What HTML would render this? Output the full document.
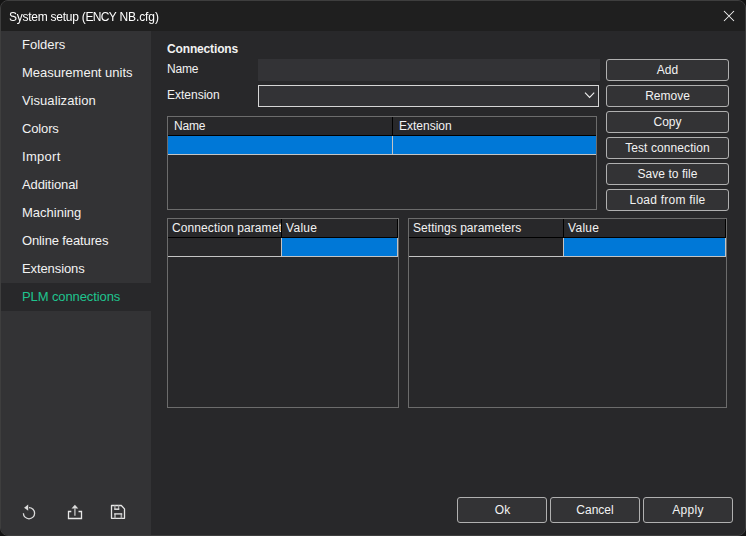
<!DOCTYPE html>
<html lang="en">
<head>
<meta charset="utf-8">
<title>System setup (ENCY NB.cfg)</title>
<style>
*{box-sizing:border-box;margin:0;padding:0}
html,body{width:746px;height:536px;overflow:hidden;background:#141414}
body{font-family:"Liberation Sans",sans-serif;color:#f2f2f2;position:relative}
#win{position:absolute;left:0;top:0;width:746px;height:536px;border:1px solid #3e3e3e;border-radius:8px;background:#28282a;overflow:hidden}
#inner{position:absolute;left:-1px;top:-1px;width:746px;height:536px}
.abs{position:absolute}
#title{left:0;top:0;width:746px;height:31px;background:#1f1f1f}
#side{left:0;top:31px;width:151px;height:505px;background:#333335}
.t{position:absolute;white-space:nowrap;line-height:16px;font-size:12px}
.nav{position:absolute;left:0;width:151px;height:28px;font-size:13px;line-height:28px;padding-left:22px;white-space:nowrap}
.nav.sel{background:#28282a;color:#1fc48e}
.btn{position:absolute;height:22px;border:1px solid #b0b0b0;border-radius:3px;background:#333335;font-size:12px;line-height:20px;text-align:center;white-space:nowrap}
.btn.big{height:26px;line-height:24px}
.tbl{position:absolute;border:1px solid #6c6c6c;background:#28282a}
.hl{position:absolute;background:#000}
.ll{position:absolute;background:#c4c4c4}
.blue{position:absolute;background:#0078d7}
</style>
</head>
<body>
<div id="win"><div id="inner">
  <div id="title" class="abs"></div>
  <div class="t" id="ttl" style="left:9px;top:9px;font-size:12px;letter-spacing:-0.26px;will-change:transform;color:#fff">System setup (<span style="letter-spacing:-0.65px">ENC</span>Y <span style="letter-spacing:-0.08px">NB.cfg)</span></div>
  <svg class="abs" style="left:722px;top:9px" width="14" height="14" viewBox="0 0 14 14"><path d="M2 2 L12 12 M12 2 L2 12" stroke="#f4f4f4" stroke-width="1.05" fill="none"/></svg>

  <div id="side" class="abs">
    <div class="nav" style="top:0px"><span>Folders</span></div>
    <div class="nav" style="top:28px"><span>Measurement units</span></div>
    <div class="nav" style="top:56px"><span style="letter-spacing:0.08px">Visualization</span></div>
    <div class="nav" style="top:84px"><span style="letter-spacing:-0.15px">Colors</span></div>
    <div class="nav" style="top:112px"><span style="letter-spacing:0.28px">Import</span></div>
    <div class="nav" style="top:140px"><span style="letter-spacing:-0.1px">Additional</span></div>
    <div class="nav" style="top:168px"><span>Machining</span></div>
    <div class="nav" style="top:196px"><span style="letter-spacing:-0.12px">Online features</span></div>
    <div class="nav" style="top:224px"><span style="letter-spacing:-0.1px">Extensions</span></div>
    <div class="nav sel" style="top:252px"><span style="letter-spacing:-0.1px">PLM connections</span></div>
  </div>

  <!-- bottom icons -->
  <svg class="abs" style="left:16px;top:498px" width="28" height="28" viewBox="16 498 28 28">
    <path d="M29 507.6 A5.6 5.6 0 1 1 23.4 513.2" stroke="#dcdcdc" stroke-width="1.3" fill="none"/>
    <path d="M24.1 507.7 L28.2 504.6 L28.2 510.8 Z" fill="#dcdcdc"/>
  </svg>
  <svg class="abs" style="left:61px;top:498px" width="28" height="28" viewBox="61 498 28 28">
    <path d="M71.3 511.5 H68.5 V518.5 H81.5 V511.5 H78.5" stroke="#e6e6e6" stroke-width="1.3" fill="none"/>
    <path d="M74.9 508.4 V515.8" stroke="#b4b4b4" stroke-width="1.5" fill="none"/>
    <path d="M74.9 504.8 L78.3 508.5 H71.5 Z" fill="#dcdcdc"/>
  </svg>
  <svg class="abs" style="left:104px;top:498px" width="28" height="28" viewBox="104 498 28 28">
    <path d="M111.5 505.5 H121.3 L124.5 508.9 V518.3 H111.5 Z" stroke="#e6e6e6" stroke-width="1.3" fill="none" stroke-linejoin="round"/>
    <path d="M114.9 505.5 V509.2 M118.6 505.5 V509.2" stroke="#a8a8a8" stroke-width="1.3" fill="none"/>
    <path d="M114.2 509.2 H119.3" stroke="#e6e6e6" stroke-width="1.4" fill="none"/>
    <path d="M115 518.3 V513.8 M121.4 518.3 V513.8" stroke="#a8a8a8" stroke-width="1.6" fill="none"/>
    <path d="M114.2 513.9 H122.2" stroke="#e6e6e6" stroke-width="1.3" fill="none"/>
  </svg>

  <!-- content -->
  <div class="t" id="hdr" style="left:167px;top:41px;font-weight:bold;letter-spacing:-0.15px">Connections</div>
  <div class="t" id="lname" style="left:167px;top:61px;letter-spacing:-0.2px">Name</div>
  <div class="t" id="lext" style="left:167px;top:87px">Extension</div>
  <div class="abs" style="left:258px;top:59px;width:342px;height:22px;background:#333336"></div>
  <div class="abs" style="left:258px;top:85px;width:341px;height:22px;background:#333336;border:1px solid #d6d6d6"></div>
  <svg class="abs" style="left:583px;top:90px" width="14" height="10" viewBox="583 90 14 10"><path d="M585 92.7 L589.6 97.4 L594.2 92.7" stroke="#f0f0f0" stroke-width="1.1" fill="none"/></svg>

  <div class="btn" style="left:606px;top:59px;width:123px"><span>Add</span></div>
  <div class="btn" style="left:606px;top:85px;width:123px"><span>Remove</span></div>
  <div class="btn" style="left:606px;top:111px;width:123px"><span>Copy</span></div>
  <div class="btn" style="left:606px;top:137px;width:123px"><span style="letter-spacing:0.09px">Test connection</span></div>
  <div class="btn" style="left:606px;top:163px;width:123px"><span style="letter-spacing:0.04px">Save to file</span></div>
  <div class="btn" style="left:606px;top:189px;width:123px"><span style="letter-spacing:0.23px">Load from file</span></div>

  <!-- table 1 -->
  <div class="tbl" style="left:167px;top:116px;width:430px;height:94px"></div>
  <div class="hl" style="left:168px;top:135px;width:428px;height:1px"></div>
  <div class="hl" style="left:392px;top:117px;width:1px;height:19px"></div>
  <div class="blue" style="left:168px;top:136px;width:428px;height:18px"></div>
  <div class="ll" style="left:168px;top:154px;width:428px;height:1px"></div>
  <div class="ll" style="left:392px;top:136px;width:1px;height:19px"></div>
  <div class="t" id="h1a" style="left:174px;top:118px;letter-spacing:-0.2px">Name</div>
  <div class="t" id="h1b" style="left:399px;top:118px">Extension</div>

  <!-- table 2 -->
  <div class="tbl" style="left:167px;top:218px;width:232px;height:190px"></div>
  <div class="hl" style="left:168px;top:237px;width:230px;height:1px"></div>
  <div class="hl" style="left:281px;top:219px;width:1px;height:19px"></div>
  <div class="hl" style="left:397px;top:219px;width:1px;height:19px"></div>
  <div class="blue" style="left:282px;top:238px;width:115px;height:18px"></div>
  <div class="ll" style="left:168px;top:256px;width:230px;height:1px"></div>
  <div class="ll" style="left:281px;top:238px;width:1px;height:19px"></div>
  <div class="ll" style="left:397px;top:238px;width:1px;height:19px"></div>
  <div class="abs" style="left:168px;top:219px;width:113px;height:18px;overflow:hidden"><div class="t" id="h2a" style="left:4px;top:1px;letter-spacing:0.1px">Connection parameters</div></div>
  <div class="t" id="h2b" style="left:286px;top:220px;letter-spacing:0.3px">Value</div>

  <!-- table 3 -->
  <div class="tbl" style="left:408px;top:218px;width:319px;height:190px"></div>
  <div class="hl" style="left:409px;top:237px;width:317px;height:1px"></div>
  <div class="hl" style="left:563px;top:219px;width:1px;height:19px"></div>
  <div class="hl" style="left:725px;top:219px;width:1px;height:19px"></div>
  <div class="blue" style="left:564px;top:238px;width:161px;height:18px"></div>
  <div class="ll" style="left:409px;top:256px;width:317px;height:1px"></div>
  <div class="ll" style="left:563px;top:238px;width:1px;height:19px"></div>
  <div class="ll" style="left:725px;top:238px;width:1px;height:19px"></div>
  <div class="t" id="h3a" style="left:413px;top:220px;letter-spacing:0.05px">Settings parameters</div>
  <div class="t" id="h3b" style="left:568px;top:220px;letter-spacing:0.3px">Value</div>

  <!-- bottom buttons -->
  <div class="btn big" style="left:457px;top:497px;width:90px"><span style="padding-left:1px">Ok</span></div>
  <div class="btn big" style="left:550px;top:497px;width:90px"><span>Cancel</span></div>
  <div class="btn big" style="left:643px;top:497px;width:90px"><span style="letter-spacing:0.25px">Apply</span></div>
</div></div>
</body>
</html>
